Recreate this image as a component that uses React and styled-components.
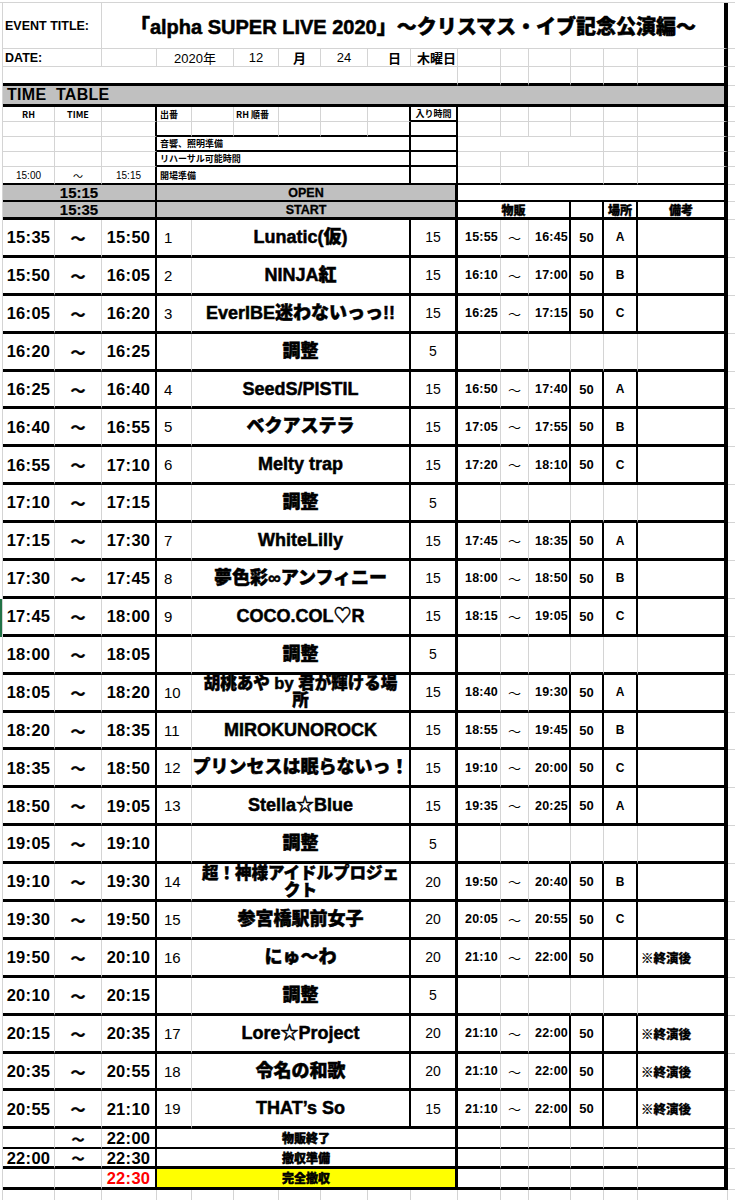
import React from 'react';
import styled, { createGlobalStyle } from 'styled-components';

const LIGHT = '#d4d4d4';
const GRAY = '#c0c0c0';
const LINES = {
  none: 'none',
  light: `1px solid ${LIGHT}`,
  black: '2px solid #000',
  thick: '3px solid #000',
  heavy: '4px solid #000',
};
const LATIN = `"Liberation Sans", "Noto Sans CJK JP", Arial, sans-serif`;
const JP = `"Noto Sans CJK JP", "Liberation Sans", sans-serif`;
const COLS = [52, 47, 55, 35, 42, 45, 42, 47, 43, 47, 43, 28, 42, 33, 34, 90];

const GlobalStyle = createGlobalStyle`
  *, *::before, *::after { box-sizing: border-box; }
  html, body { margin: 0; padding: 0; background: #fff; }
  body { font-family: ${LATIN}; color: #000; }
`;

const Sheet = styled.main`
  padding-top: 2px;
  width: 735px;
  overflow: hidden;
`;

const SheetRow = styled.div`
  display: flex;
  height: ${(p) => p.$h}px;
  border-top: ${(p) => (p.$top ? `1px solid ${LIGHT}` : 'none')};
`;

const Lead = styled.div`
  flex: none;
  width: 2px;
  background: ${(p) => (p.$selected ? '#217346' : 'transparent')};
`;

const RowGrid = styled.div`
  flex: none;
  display: grid;
  grid-template-columns: ${COLS.map((c) => `${c}px`).join(' ')};
  width: 726px;
  height: 100%;
  border-left: 1px solid ${LIGHT};
`;

const Tail = styled.div`
  flex: 1;
  border-bottom: 1px solid ${LIGHT};
`;

const Cell = styled.div`
  grid-column: span ${(p) => p.$span || 1};
  display: flex;
  align-items: center;
  justify-content: ${(p) =>
    p.$align === 'left' ? 'flex-start' : p.$align === 'right' ? 'flex-end' : 'center'};
  padding: 0 ${(p) => (p.$pad ?? 1)}px;
  border-right: ${(p) => LINES[p.$br || 'light']};
  border-bottom: ${(p) => LINES[p.$bb || 'light']};
  background: ${(p) => p.$bg || 'transparent'};
  overflow: hidden;
  white-space: nowrap;
  min-width: 0;
  line-height: 1.1;
`;

const EventLabel = styled.span`
  font: 700 12.5px ${LATIN};
`;
const Title = styled.h1`
  margin: 0;
  font: 900 20px ${LATIN};
  -webkit-text-stroke: 0.5px #000;
`;
const DateText = styled.span`
  font: ${(p) => (p.$bold ? 700 : 400)} 13px ${LATIN};
`;
const SectionTitle = styled.h2`
  margin: 0;
  font: 700 16px ${LATIN};
  letter-spacing: 0.3px;
`;
const Tiny = styled.span`
  font: 700 9px ${JP};
`;
const TinyTime = styled.span`
  font: 400 10px ${LATIN};
`;
const MarkTime = styled.span`
  font: 700 15px ${LATIN};
  -webkit-text-stroke: 0.2px #000;
`;
const Marker = styled.span`
  font: 900 12.5px ${LATIN};
  -webkit-text-stroke: 0.3px #000;
`;
const ColHead = styled.span`
  font: 900 12px ${JP};
  -webkit-text-stroke: 0.4px #000;
`;
const BigTime = styled.span`
  font: 700 16.5px ${LATIN};
  letter-spacing: 0.3px;
  line-height: 1;
  color: ${(p) => (p.$red ? '#ff0000' : '#000')};
`;
const Wave = styled.span`
  display: block;
  font: 700 ${(p) => (p.$small ? 13 : 15)}px ${JP};
  line-height: ${(p) => (p.$small ? 13 : 15)}px;
  -webkit-text-stroke: 0.4px #000;
`;
const PerfNo = styled.span`
  font: 400 15px ${LATIN};
`;
const ActName = styled.span`
  display: block;
  text-align: center;
  font: 900 ${(p) => (p.$small ? 16.5 : 18)}px ${LATIN};
  line-height: 17px;
  -webkit-text-stroke: 0.5px #000;
`;
const Minutes = styled.span`
  font: 400 14px ${LATIN};
`;
const SaleTime = styled.span`
  font: 700 12.5px ${LATIN};
  letter-spacing: 0.2px;
`;
const SaleWave = styled.span`
  font: 400 13px ${JP};
  line-height: 1;
`;
const SaleCount = styled.span`
  font: 700 13px ${LATIN};
`;
const Place = styled.span`
  font: 700 12px ${LATIN};
`;
const Note = styled.span`
  font: 900 12.5px ${JP};
  -webkit-text-stroke: 0.3px #000;
`;
const ClosingText = styled.span`
  font: 900 12px ${JP};
  line-height: 1;
  -webkit-text-stroke: 0.5px #000;
`;

const shows = [
  ['15:35', '15:50', '1', ['Lunatic(仮)'], '15', '15:55', '16:45', '50', 'A', ''],
  ['15:50', '16:05', '2', ['NINJA紅'], '15', '16:10', '17:00', '50', 'B', ''],
  ['16:05', '16:20', '3', ['EverIBE迷わないっっ!!'], '15', '16:25', '17:15', '50', 'C', ''],
  ['16:20', '16:25', null],
  ['16:25', '16:40', '4', ['SeedS/PISTIL'], '15', '16:50', '17:40', '50', 'A', ''],
  ['16:40', '16:55', '5', ['ベクアステラ'], '15', '17:05', '17:55', '50', 'B', ''],
  ['16:55', '17:10', '6', ['Melty trap'], '15', '17:20', '18:10', '50', 'C', ''],
  ['17:10', '17:15', null],
  ['17:15', '17:30', '7', ['WhiteLilly'], '15', '17:45', '18:35', '50', 'A', ''],
  ['17:30', '17:45', '8', ['夢色彩∞アンフィニー'], '15', '18:00', '18:50', '50', 'B', ''],
  ['17:45', '18:00', '9', ['COCO.COL♡R'], '15', '18:15', '19:05', '50', 'C', ''],
  ['18:00', '18:05', null],
  ['18:05', '18:20', '10', ['胡桃あや by 君が輝ける場', '所'], '15', '18:40', '19:30', '50', 'A', ''],
  ['18:20', '18:35', '11', ['MIROKUNOROCK'], '15', '18:55', '19:45', '50', 'B', ''],
  ['18:35', '18:50', '12', ['プリンセスは眠らないっ！'], '15', '19:10', '20:00', '50', 'C', ''],
  ['18:50', '19:05', '13', ['Stella☆Blue'], '15', '19:35', '20:25', '50', 'A', ''],
  ['19:05', '19:10', null],
  ['19:10', '19:30', '14', ['超！神様アイドルプロジェ', 'クト'], '20', '19:50', '20:40', '50', 'B', ''],
  ['19:30', '19:50', '15', ['参宮橋駅前女子'], '20', '20:05', '20:55', '50', 'C', ''],
  ['19:50', '20:10', '16', ['にゅ〜わ'], '20', '21:10', '22:00', '50', '', '※終演後'],
  ['20:10', '20:15', null],
  ['20:15', '20:35', '17', ['Lore☆Project'], '20', '21:10', '22:00', '50', '', '※終演後'],
  ['20:35', '20:55', '18', ['令名の和歌'], '20', '21:10', '22:00', '50', '', '※終演後'],
  ['20:55', '21:10', '19', ['THAT’s So'], '15', '21:10', '22:00', '50', '', '※終演後'],
];

function Row({ h, top, selected, children }) {
  return (
    <SheetRow $h={h} $top={top}>
      <Lead $selected={selected} />
      <RowGrid>{children}</RowGrid>
      <Tail />
    </SheetRow>
  );
}

function LightRight({ bb = 'light', layout = [1, 1, 1, 1, 1, 1] }) {
  return layout.map((span, i) => (
    <Cell key={i} $span={span} $bb={bb} $br={i === layout.length - 1 ? 'heavy' : 'light'} />
  ));
}

function ShowRow({ data, selected }) {
  const [from, to, no, name, mins, s1, s2, count, place, note] = data;
  const adjust = no === null;
  const bb = 'thick';
  return (
    <Row h={37.9} selected={selected}>
      <Cell $bb={bb}><BigTime>{from}</BigTime></Cell>
      <Cell $bb={bb}><Wave>〜</Wave></Cell>
      <Cell $bb={bb} $br="black"><BigTime>{to}</BigTime></Cell>
      <Cell $bb={bb} $align="left" $pad={7}>{!adjust && <PerfNo>{no}</PerfNo>}</Cell>
      <Cell $bb={bb} $span={5} $br="black" $pad={0}>
        <ActName $small={!adjust && name.length > 1}>
          {adjust
            ? '調整'
            : name.map((line, i) => (
                <React.Fragment key={i}>
                  {i > 0 && <br />}
                  {line}
                </React.Fragment>
              ))}
        </ActName>
      </Cell>
      <Cell $bb={bb} $br="thick"><Minutes>{adjust ? '5' : mins}</Minutes></Cell>
      {adjust ? (
        <LightRight bb={bb} />
      ) : (
        <>
          <Cell $bb={bb} $align="right" $pad={2}><SaleTime>{s1}</SaleTime></Cell>
          <Cell $bb={bb}><SaleWave>〜</SaleWave></Cell>
          <Cell $bb={bb} $br="black" $align="right" $pad={1}><SaleTime>{s2}</SaleTime></Cell>
          <Cell $bb={bb} $br="black"><SaleCount>{count}</SaleCount></Cell>
          <Cell $bb={bb} $br="black"><Place>{place}</Place></Cell>
          <Cell $bb={bb} $br="heavy" $align="left" $pad={3}><Note>{note}</Note></Cell>
        </>
      )}
    </Row>
  );
}

function HeaderRow({ h, left, middle, bbLeft = 'light', bbBox = 'black', right, bbRight = 'light', rightLayout }) {
  return (
    <Row h={h}>
      <Cell $bb={bbLeft}>{left?.[0] && <TinyTime>{left[0]}</TinyTime>}</Cell>
      <Cell $bb={bbLeft}>{left?.[1] && <TinyTime>{left[1]}</TinyTime>}</Cell>
      <Cell $bb={bbLeft} $br="black">{left?.[2] && <TinyTime>{left[2]}</TinyTime>}</Cell>
      {middle}
      <Cell $bb={bbBox} $br="black">{right}</Cell>
      <LightRight bb={bbRight} layout={rightLayout} />
    </Row>
  );
}

export default function App() {
  return (
    <>
      <GlobalStyle />
      <Sheet>
        <Row h={47} top>
          <Cell $span={2} $align="left" $pad={2}><EventLabel>EVENT TITLE:</EventLabel></Cell>
          <Cell $span={14} $br="heavy">
            <Title>「alpha SUPER LIVE 2020」〜クリスマス・イブ記念公演編〜</Title>
          </Cell>
        </Row>
        <Row h={18}>
          <Cell $span={2} $align="left" $pad={2}><EventLabel>DATE:</EventLabel></Cell>
          <Cell />
          <Cell $span={2}><DateText>2020年</DateText></Cell>
          <Cell><DateText>12</DateText></Cell>
          <Cell><DateText $bold>月</DateText></Cell>
          <Cell><DateText>24</DateText></Cell>
          <Cell $align="right" $pad={9}><DateText $bold>日</DateText></Cell>
          <Cell $align="left" $pad={6}><DateText $bold>木曜日</DateText></Cell>
          <Cell />
          <Cell />
          <Cell />
          <Cell />
          <Cell />
          <Cell $br="heavy" />
        </Row>
        <Row h={19}>
          <Cell $span={10} $bb="thick" />
          <LightRight bb="thick" />
        </Row>
        <Row h={21}>
          <Cell $span={16} $bb="thick" $br="heavy" $bg={GRAY} $align="left" $pad={4}>
            <SectionTitle>TIME&nbsp;&nbsp;TABLE</SectionTitle>
          </Cell>
        </Row>

        <Row h={15}>
          <Cell><Tiny>RH</Tiny></Cell>
          <Cell><Tiny>TIME</Tiny></Cell>
          <Cell $br="black" />
          <Cell $align="left" $pad={3}><Tiny>出番</Tiny></Cell>
          <Cell />
          <Cell $align="left" $pad={2}><Tiny>RH 順番</Tiny></Cell>
          <Cell />
          <Cell />
          <Cell $br="black" />
          <Cell $bb="black" $br="black"><Tiny>入り時間</Tiny></Cell>
          <LightRight />
        </Row>
        <Row h={15}>
          <Cell />
          <Cell />
          <Cell $br="black" />
          <Cell $bb="black" />
          <Cell $bb="black" />
          <Cell $bb="black" />
          <Cell $bb="black" />
          <Cell $bb="black" />
          <Cell $bb="black" $br="black" />
          <Cell $bb="black" $br="black" />
          <LightRight />
        </Row>
        <HeaderRow
          h={15}
          middle={<Cell $span={6} $bb="black" $br="black" $align="left" $pad={3}><Tiny>音響、照明準備</Tiny></Cell>}
          rightLayout={[4, 1, 1]}
        />
        <HeaderRow
          h={15}
          middle={<Cell $span={6} $bb="black" $br="black" $align="left" $pad={3}><Tiny>リハーサル可能時間</Tiny></Cell>}
          rightLayout={[1, 1, 2, 1, 1]}
        />
        <HeaderRow
          h={18}
          left={['15:00', '〜', '15:15']}
          bbLeft="black"
          bbRight="black"
          middle={<Cell $span={6} $bb="black" $br="black" $align="left" $pad={3}><Tiny>開場準備</Tiny></Cell>}
          rightLayout={[1, 3, 1, 1]}
        />

        <Row h={17}>
          <Cell $span={3} $bb="black" $br="black" $bg={GRAY}><MarkTime>15:15</MarkTime></Cell>
          <Cell $span={7} $bb="black" $br="thick" $bg={GRAY}><Marker>OPEN</Marker></Cell>
          <Cell $span={6} $bb="black" $br="heavy" />
        </Row>
        <Row h={18}>
          <Cell $span={3} $bb="thick" $br="black" $bg={GRAY}><MarkTime>15:35</MarkTime></Cell>
          <Cell $span={7} $bb="thick" $br="thick" $bg={GRAY}><Marker>START</Marker></Cell>
          <Cell $span={3} $bb="thick" $br="black"><ColHead>物販</ColHead></Cell>
          <Cell $bb="thick" $br="black" />
          <Cell $bb="thick" $br="black"><ColHead>場所</ColHead></Cell>
          <Cell $bb="thick" $br="heavy"><ColHead>備考</ColHead></Cell>
        </Row>

        {shows.map((s, i) => (
          <ShowRow key={i} data={s} selected={i === 10} />
        ))}

        <Row h={20}>
          <Cell $bb="black" />
          <Cell $bb="black"><Wave $small>〜</Wave></Cell>
          <Cell $bb="black" $br="black"><BigTime>22:00</BigTime></Cell>
          <Cell $span={7} $bb="black" $br="thick"><ClosingText>物販終了</ClosingText></Cell>
          <LightRight bb="black" />
        </Row>
        <Row h={20}>
          <Cell $bb="thick"><BigTime>22:00</BigTime></Cell>
          <Cell $bb="thick"><Wave $small>〜</Wave></Cell>
          <Cell $bb="thick" $br="black"><BigTime>22:30</BigTime></Cell>
          <Cell $span={7} $bb="thick" $br="thick"><ClosingText>撤収準備</ClosingText></Cell>
          <LightRight bb="thick" />
        </Row>
        <Row h={21}>
          <Cell $bb="thick" />
          <Cell $bb="thick" />
          <Cell $bb="thick" $br="black"><BigTime $red>22:30</BigTime></Cell>
          <Cell $span={7} $bb="thick" $br="thick" $bg="#ffff00"><ClosingText>完全撤収</ClosingText></Cell>
          <LightRight bb="thick" />
        </Row>
        <Row h={20}>
          {COLS.map((_, i) => (
            <Cell key={i} />
          ))}
        </Row>
      </Sheet>
    </>
  );
}
